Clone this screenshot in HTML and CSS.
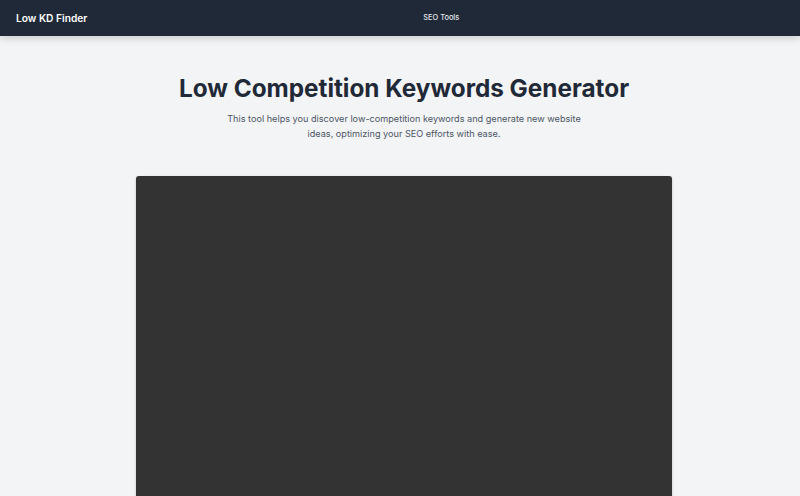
FILE: index.html
```html
<!DOCTYPE html>
<html lang="en">
<head>
<meta charset="utf-8">
<title>Low KD Finder</title>
<link rel="stylesheet" href="styles.css">
</head>
<body>
<header class="topbar">
  <a class="logo" href="#">Low KD Finder</a>
  <nav class="nav"><a href="#">SEO Tools</a></nav>
</header>
<main class="main">
  <section class="hero">
    <h1 class="title">Low Competition Keywords Generator</h1>
    <p class="subtitle">This tool helps you discover low-competition keywords and generate new website ideas, optimizing your SEO efforts with ease.</p>
  </section>
  <div class="tool"></div>
</main>
</body>
</html>
```
FILE: styles.css
```css
* { box-sizing: border-box; }
html, body { margin: 0; padding: 0; }
body {
  background: #f3f4f6;
  font-family: Inter, "Noto Sans", sans-serif;
  color: #1f2937;
  height: 496px;
  overflow: hidden;
}
.topbar {
  height: 36px;
  background: #1f2937;
  display: flex;
  align-items: center;
  padding: 0 16px;
  gap: 336px;
  box-shadow: 0 2px 8px rgba(0,0,0,0.18);
  position: relative;
}
.logo {
  color: #fff;
  font-size: 10.2px;
  line-height: 14px;
  font-weight: 600;
  text-decoration: none;
}
.nav {
  font-size: 7.4px;
  line-height: 14px;
}
.nav a {
  color: #e5e7eb;
  font-weight: 500;
  text-decoration: none;
}
.main {
  padding: 0 0 0 8px;
  display: flex;
  flex-direction: column;
  align-items: center;
}
.hero {
  padding-top: 36px;
  text-align: center;
  width: 400px;
  display: flex;
  flex-direction: column;
  align-items: center;
}
.title {
  margin: 0 -100px;
  font-size: 24.3px;
  font-weight: 700;
  line-height: 32px;
  color: #1f2937;
  white-space: nowrap;
}
.subtitle {
  margin: 6.5px 0 0;
  width: 364px;
  font-size: 9.15px;
  line-height: 15px;
  color: #4b5563;
}
.tool {
  margin-top: 35.5px;
  width: 536px;
  height: 400px;
  background: #333333;
  border-radius: 3px;
  box-shadow: 0 1px 3px rgba(0,0,0,0.2);
}
```
